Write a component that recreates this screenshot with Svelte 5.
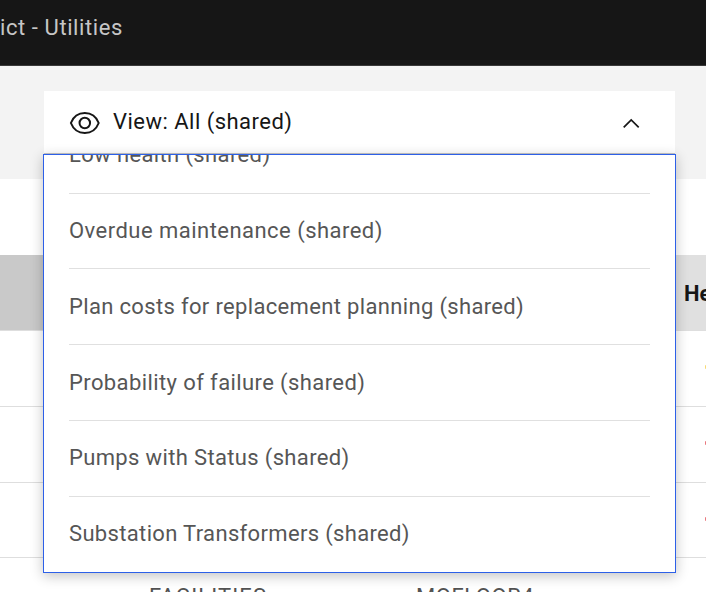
<script>
  const options = [
    { label: 'Low health (shared)', height: 39, spacing: 0.38, lift: 0 },
    { label: 'Overdue maintenance (shared)', height: 75, spacing: 0.47, lift: 2 },
    { label: 'Plan costs for replacement planning (shared)', height: 76, spacing: 0.34, lift: 2 },
    { label: 'Probability of failure (shared)', height: 76, spacing: 0.4, lift: 2 },
    { label: 'Pumps with Status (shared)', height: 76, spacing: 0.35, lift: 4 },
    { label: 'Substation Transformers (shared)', height: 75, spacing: 0.34, lift: 4 }
  ];
  const rows = [
    { height: 76, color: '#f1c21b' },
    { height: 76, color: '#da1e28' },
    { height: 75, color: '#da1e28' },
    { height: 76, color: '#da1e28', site: 'FACILITIES', location: 'MOFLOOR4' }
  ];
</script>

<div class="page">
  <header><span>ict - Utilities</span></header>
  <section class="toolbar">
    <div class="picker">
      <button class="trigger" aria-expanded="true">
        <svg class="eye" width="32" height="32" viewBox="0 0 32 32" aria-hidden="true">
          <path d="M1.9 16C4.5 9.300 10 6 15.800 6S27.100 9.300 29.700 16C27.100 22.700 21.600 26 15.800 26S4.500 22.700 1.900 16Z" />
          <circle cx="15.8" cy="16" r="5.250" />
        </svg>
        <span class="selected">View: All (shared)</span>
        <svg class="chevron" width="18" height="12" viewBox="0 0 18 12" aria-hidden="true">
          <path d="M1.700 9.300L9.200 1.900L16.700 9.300" />
        </svg>
      </button>
      <div class="menu">
        {#each options as option, i}
          <div class="option" class:first={i === 0} style:height="{option.height}px" style:padding-bottom="{option.lift}px">
            <span style:letter-spacing="{option.spacing}px">{option.label}</span>
          </div>
        {/each}
      </div>
    </div>
  </section>
  <div class="gap"></div>
  <div class="table">
    <div class="head"><div class="sorted"></div><div class="health">Health</div></div>
    {#each rows as row}
      <div class="row" style:height="{row.height}px">
        <span class="site">{row.site ?? ''}</span>
        <span class="location">{row.location ?? ''}</span>
        <i style:background={row.color}></i>
      </div>
    {/each}
  </div>
</div>

<style>
  .page {
    width: 706px;
    height: 592px;
    overflow: hidden;
    background: #fff;
    color: #161616;
    font: 22px/30px Roboto, "Liberation Sans", sans-serif;
  }
  header {
    box-sizing: border-box;
    height: 66px;
    padding-top: 13px;
    background: #161616;
    border-bottom: 1px solid #393939;
    color: #c6c6c6;
    letter-spacing: 0.58px;
    white-space: nowrap;
  }
  .toolbar {
    box-sizing: border-box;
    height: 113px;
    padding: 25px 31px 0 44px;
    background: #f3f3f3;
  }
  .picker { position: relative; }
  .trigger {
    box-sizing: border-box;
    display: flex;
    align-items: center;
    width: 100%;
    height: 63px;
    padding: 0 35px 0 25px;
    border: 0;
    border-bottom: 1px solid #c6c6c6;
    background: #fff;
    color: inherit;
    font: inherit;
  }
  svg { flex: none; fill: none; stroke: #161616; }
  .eye { stroke-width: 2; margin-top: 1px; }
  .chevron { margin: 3px 0 0 auto; stroke-width: 1.700; }
  .selected { margin: -1px 0 0 12px; letter-spacing: 0.48px; white-space: nowrap; }
  .menu {
    position: absolute;
    z-index: 2;
    top: 63px;
    left: -1px;
    right: -1px;
    box-sizing: border-box;
    height: 419px;
    padding: 0 25px;
    overflow: hidden;
    border: 1px solid #2d60e8;
    background: #fff;
    box-shadow: 0 3px 12px rgba(0, 0, 0, 0.24);
  }
  .option {
    box-sizing: border-box;
    display: flex;
    align-items: center;
    border-bottom: 1px solid #e0e0e0;
    color: #565656;
    white-space: nowrap;
  }
  .option:last-child { border-bottom: 0; }
  .option span { height: 28px; line-height: 30px; overflow: hidden; padding-right: 4px; }
  .option.first { align-items: flex-start; }
  .option.first span { margin-top: -15px; }
  .gap { height: 76px; }
  .head { display: flex; justify-content: space-between; height: 75px; background: #e0e0e0; }
  .sorted { width: 360px; background: #c9c9c9; }
  .health {
    width: 22px;
    overflow: hidden;
    color: #161616;
    font-weight: 700;
    line-height: 77px;
  }
  .row {
    position: relative;
    box-sizing: border-box;
    display: flex;
    border-top: 1px solid #dedede;
    color: #525252;
    overflow: hidden;
  }
  .site { width: 267px; padding: 24px 0 0 149px; flex: none; letter-spacing: 1.1px; }
  .location { padding-top: 24px; letter-spacing: 0.550px; }
  .row i {
    position: absolute;
    top: 34px;
    left: 705px;
    width: 12px;
    height: 4px;
    border-radius: 1px;
    opacity: 0.600;
  }
</style>
